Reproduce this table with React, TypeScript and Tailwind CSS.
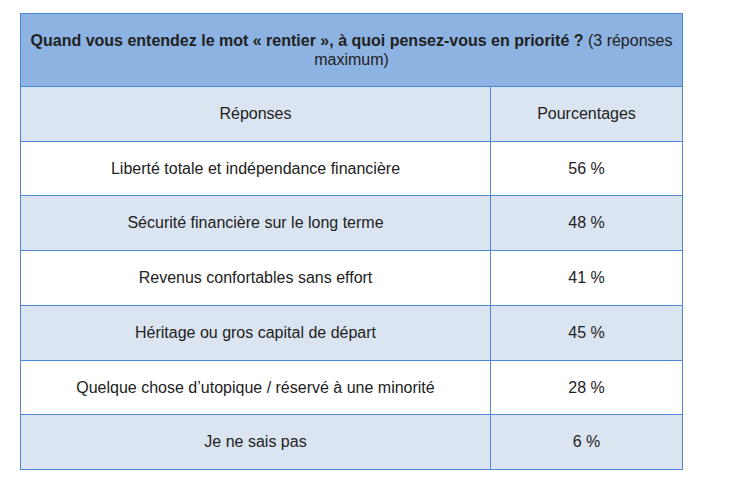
const rows = [
  { label: "Liberté totale et indépendance financière", value: "56 %", cls: "h-[54px] bg-white" },
  { label: "Sécurité financière sur le long terme", value: "48 %", cls: "h-[55px] bg-[#dbe5f1]" },
  { label: "Revenus confortables sans effort", value: "41 %", cls: "h-[55px] bg-white" },
  { label: "Héritage ou gros capital de départ", value: "45 %", cls: "h-[55px] bg-[#dbe5f1]" },
  { label: "Quelque chose d’utopique / réservé à une minorité", value: "28 %", cls: "h-[54px] bg-white" },
  { label: "Je ne sais pas", value: "6 %", cls: "h-[55px] bg-[#dbe5f1]" },
];

export default function App() {
  return (
    <div className="min-h-[481px] bg-white pt-[13px] pl-[20px] font-['Liberation_Sans',Arial,sans-serif] text-[16px] text-[#222]">
      <table className="w-[663px] border-collapse border border-[#4f87d6]">
        <thead>
          <tr className="h-[73px] bg-[#8db3e2]">
            <th
              colSpan={2}
              className="border border-[#4f87d6] px-2 text-center font-normal leading-[19px]"
            >
              <b>
                Quand vous entendez le mot « rentier », à quoi pensez-vous en
                priorité ?
              </b>{" "}
              (3 réponses maximum)
            </th>
          </tr>
          <tr className="h-[55px] bg-[#dbe5f1]">
            <th className="w-[470px] border border-[#4f87d6] font-normal">
              Réponses
            </th>
            <th className="border border-[#4f87d6] font-normal">
              Pourcentages
            </th>
          </tr>
        </thead>
        <tbody>
          {rows.map((r) => (
            <tr key={r.label} className={r.cls}>
              <td className="border border-[#4f87d6] text-center">
                {r.label}
              </td>
              <td className="border border-[#4f87d6] text-center">
                {r.value}
              </td>
            </tr>
          ))}
        </tbody>
      </table>
    </div>
  );
}
